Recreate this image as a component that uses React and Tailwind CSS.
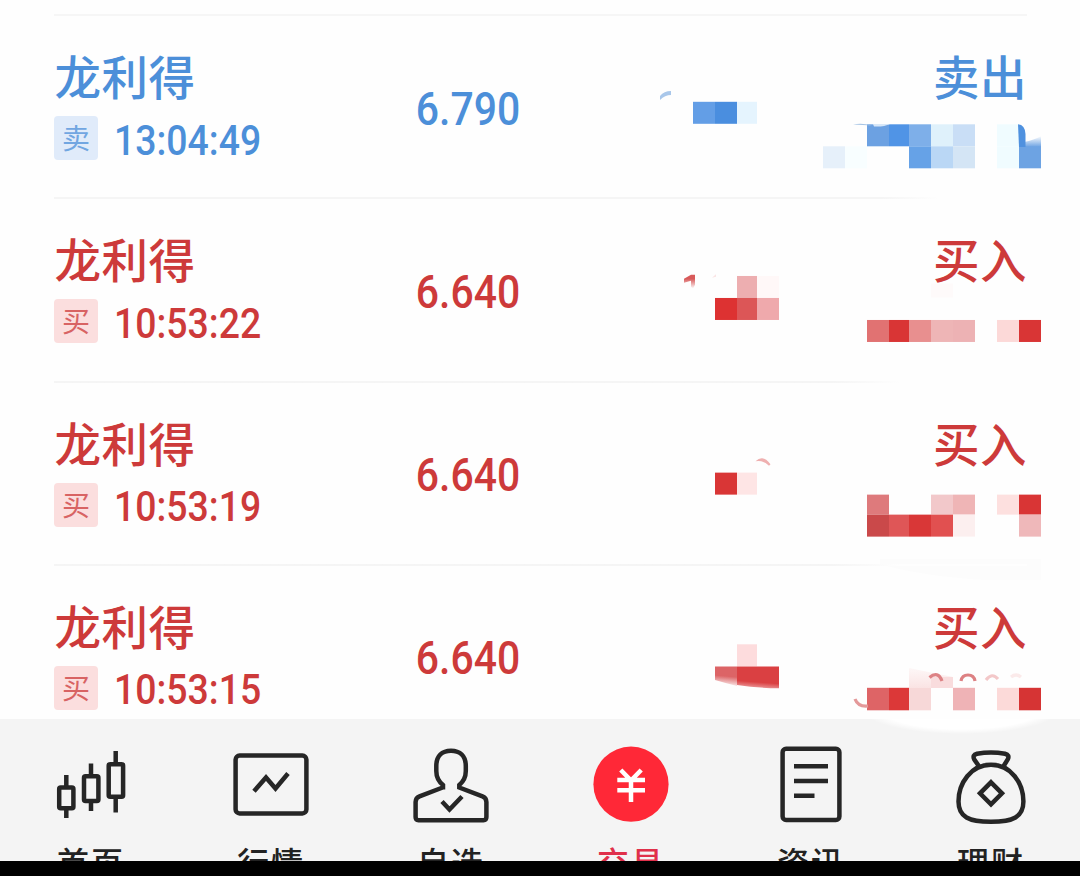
import React from "react";

// Each masked block: [x, y, width, height, colour]
const trades = [
  {
    name: "龙利得", tag: "卖", time: "13:04:49", price: "6.790", side: "卖出", sell: true, top: 14, fade: "full",
    blocks: [
      [693, 102, 22, 22, "#639ee6"], [715, 102, 22, 22, "#4a8edf"], [737, 102, 20, 22, "#e5f4fe"],
      [823, 146.5, 22, 22, "#e6f0fa"], [845, 146.5, 22, 22, "#f8feff"],
      [867, 124.5, 22, 22, "#6ca1e2"], [889, 124.5, 20, 22, "#5094e6"], [909, 124.5, 22, 22, "#7eafe9"],
      [931, 124.5, 22, 22, "#dff1fb"], [953, 124.5, 22, 22, "#c9def6"], [997, 124.5, 22, 22, "#f0fcff"],
      [909, 146.5, 22, 22, "#66a2e7"], [931, 146.5, 22, 22, "#bad7f5"], [953, 146.5, 22, 22, "#d4e5f5"],
      [997, 146.5, 22, 22, "#f0fcff"], [1019, 146.5, 22, 22, "#6da3e3"],
    ],
    extra: (
      <>
        <path d="M660 96 Q664 91 671 91 V95 Q665 95 660 100Z" fill="#a9c7ea" />
        <path d="M853 124.5 Q862 122.5 872 125.5Z" fill="#a6c4e5" />
        <path d="M873 124 H890 Q884 127 874 126.5Z" fill="#d7e7f8" />
        <path d="M1024 147 V142 Q1034 140 1041 136 V147Z" fill="url(#sellFade)" />
        <path d="M1018 124.3 Q1025 125 1025.5 134 V147 H1019Z" fill="#4f91df" />
      </>
    ),
  },
  {
    name: "龙利得", tag: "买", time: "10:53:22", price: "6.640", side: "买入", sell: false, top: 197.33, fade: "long",
    blocks: [
      [737, 276.5, 20, 22, "#edaeb0"], [757, 276.5, 22, 22, "#fff8f8"],
      [715, 298.5, 22, 22, "#dd3232"], [737, 298.5, 20, 22, "#dc5657"], [757, 298.5, 22, 22, "#efa9ac"],
      [931, 284, 22, 14, "#fefafa"],
      [867, 320.5, 22, 22, "#e17272"], [889, 320.5, 20, 22, "#d93535"], [909, 320.5, 22, 22, "#e88f8f"],
      [931, 320.5, 22, 22, "#eeb5b6"], [953, 320.5, 22, 22, "#edb2b4"],
      [997, 320.5, 22, 22, "#fcd9d8"], [1019, 320.5, 22, 22, "#d93535"],
    ],
    extra: (
      <>
        <path d="M684 279 L691 275 H695 V285 L693 289 L691 287 V281 L684 283Z" fill="url(#buyFade)" />
        <path d="M712 278 L716 274.5 V277Z" fill="#fae4e4" />
      </>
    ),
  },
  {
    name: "龙利得", tag: "买", time: "10:53:19", price: "6.640", side: "买入", sell: false, top: 380.67, fade: "short",
    blocks: [
      [715, 472.5, 22, 22, "#d93636"], [737, 472.5, 20, 22, "#fee5e5"],
      [867, 494.5, 22, 20, "#de7a7c"], [931, 494.5, 22, 20, "#f2c8ca"], [953, 494.5, 22, 20, "#efb5b6"],
      [997, 494.5, 22, 20, "#fde0df"], [1019, 494.5, 22, 20, "#d93535"],
      [867, 514.5, 22, 22, "#ca494a"], [889, 514.5, 20, 22, "#df5657"], [909, 514.5, 22, 22, "#d93737"],
      [931, 514.5, 22, 22, "#e15050"], [953, 514.5, 22, 22, "#fcefef"], [1019, 514.5, 22, 22, "#efb8ba"],
    ],
    extra: <path d="M755.5 461 Q763 453.5 770.5 464 L769 465.5 Q763 459.5 755.5 461Z" fill="#efb0b0" />,
  },
  {
    name: "龙利得", tag: "买", time: "10:53:15", price: "6.640", side: "买入", sell: false, top: 564, fade: "short",
    blocks: [
      [737, 644.5, 20, 22, "#fddcdd"],
      [867, 688, 22, 22.5, "#de6466"], [889, 688, 20, 22.5, "#dc3838"], [909, 688, 22, 22.5, "#f7d8d8"],
      [953, 688, 22, 22.5, "#efb3b6"], [997, 688, 22, 22.5, "#fcdad9"], [1019, 688, 22, 22.5, "#d63434"],
    ],
    extra: (
      <>
        <path d="M880 559 H1041 V580 H985 Q920 576 880 564Z" fill="#fcfcfc" />
        <path d="M715 666.5 H737 V686 Q725 683 715 680Z" fill="url(#smearLight)" />
        <path d="M737 666.5 H779 V688.3 Q757 688 737 685Z" fill="url(#smearDark)" />
        <path d="M909 668 L953 677 V688 H909Z" fill="url(#haze)" />
        <path d="M931 677 H953 V688 H931Z" fill="#f9dcdd" />
        <g fill="none" strokeWidth="3.2">
          <path d="M929.5 677.5 Q938 670.5 942 681" stroke="#dd8285" />
          <path d="M961 681 Q962 675 968 675 T975 681" stroke="#dd8183" />
          <path d="M986 680 Q992 672 998 679" stroke="#f3c8c9" />
          <path d="M1011 677 Q1016 673 1021 677" stroke="#fbeaea" />
          <path d="M855 699 Q858 707 868 706" stroke="#e4999a" />
        </g>
      </>
    ),
  },
];

const dividers = {
  full: "bg-[#f6f6f6]",
  long: "bg-linear-to-r from-[#f5f5f5] from-85% to-[#fefefe] to-91%",
  short: "bg-linear-to-r from-[#f5f5f5] from-80% to-[#fefefe] to-87%",
};

function Mask({ trade }) {
  return (
    <svg
      className="absolute top-0 right-0 h-[184px] w-[440px] overflow-visible"
      viewBox={`640 ${trade.top} 440 184`}
      aria-hidden="true"
    >
      <defs>
        <linearGradient id="sellFade" x1="0" y1="0" x2="0" y2="1">
          <stop offset="0" stopColor="#6da3e3" stopOpacity="0" />
          <stop offset="1" stopColor="#6da3e3" />
        </linearGradient>
        <linearGradient id="buyFade" x1="0" y1="0" x2="0" y2="1">
          <stop offset="0.3" stopColor="#d85a5a" />
          <stop offset="1" stopColor="#d85a5a" stopOpacity="0" />
        </linearGradient>
        <linearGradient id="smearLight" x1="0.1" y1="0" x2="0" y2="1">
          <stop offset="0.45" stopColor="#dc6466" />
          <stop offset="1" stopColor="#dc6466" stopOpacity="0" />
        </linearGradient>
        <linearGradient id="smearDark" x1="0.15" y1="0" x2="0" y2="1">
          <stop offset="0.65" stopColor="#da4042" />
          <stop offset="1" stopColor="#da4042" stopOpacity="0.4" />
        </linearGradient>
        <linearGradient id="haze" x1="0" y1="0" x2="0" y2="1">
          <stop offset="0" stopColor="#fbe6e6" stopOpacity="0.3" />
          <stop offset="1" stopColor="#fae3e3" />
        </linearGradient>
      </defs>
      <g transform="translate(0 -0.2)">
        {trade.blocks.map(([x, y, w, h, fill], i) => (
          <rect key={i} x={x} y={y} width={w} height={h} fill={fill} />
        ))}
      </g>
      {trade.extra}
    </svg>
  );
}

function TradeRow({ trade }) {
  const color = trade.sell ? "text-[#4c8fd9]" : "text-[#cd3a3a]";
  const tag = trade.sell ? "bg-[#e0ebfa]" : "bg-[#fbdede]";
  return (
    <div className={`relative h-[183.33px] shrink-0 pl-[54px] pr-[53px] ${color}`}>
      <Mask trade={trade} />
      <div className={`relative h-[2px] w-full ${dividers[trade.fade]}`} />
      <div className="relative grid grid-cols-[361px_1fr_auto]">
        <div className="pt-[31px]">
          <div className="h-[56px] pl-[0.5px] text-[46.5px] leading-[56px] font-[450] tracking-[0.5px]">{trade.name}</div>
          <div className="mt-[13px] flex h-[44px] items-center">
            <span className={`flex size-[44px] items-center justify-center rounded-[4px] text-[28px] leading-none ${tag}`}>
              <span className="-translate-y-[1.5px] opacity-75">{trade.tag}</span>
            </span>
            <span className="ml-[16px] inline-block origin-left scale-x-[0.89] pt-[5px] font-[Roboto] text-[42px] leading-[44px] font-medium whitespace-nowrap">
              {trade.time}
            </span>
          </div>
        </div>
        <div className="pt-[64.5px]">
          <span className="inline-block origin-left scale-x-[0.87] pl-[1px] font-[Roboto] text-[47px] leading-[56px] font-medium">
            {trade.price}
          </span>
        </div>
        <div className="h-[56px] pt-[31px] text-[46.5px] leading-[56px] font-[450] tracking-[0.5px]">{trade.side}</div>
      </div>
    </div>
  );
}

const tabs = [
  {
    label: "首页",
    box: "51 744 80 80",
    icon: (
      <>
        <rect x="59.2" y="787.4" width="14.2" height="20.8" rx="1.5" />
        <path d="M66.3 775V787M66.3 808V818" />
        <rect x="84" y="776.2" width="14.4" height="24.8" rx="1.5" />
        <path d="M91 763.5V776M91 801V811" />
        <rect x="108.7" y="764.2" width="14.4" height="32.6" rx="1.5" />
        <path d="M115.7 751V764M115.7 797V812.5" />
      </>
    ),
  },
  {
    label: "行情",
    box: "231 744 80 80",
    icon: (
      <>
        <rect x="235.6" y="755.6" width="70.8" height="57.8" rx="4" />
        <path d="M254 791.3L266 777.5L275.5 788.5L288 773.5" />
      </>
    ),
  },
  {
    label: "自选",
    box: "411 744 80 80",
    icon: (
      <>
        <path d="M443 789.5V785C438 781 436.3 776 436.3 771V766C436.3 756 442 750.7 451 750.7S465.8 756 465.8 766V771C465.8 776 464 781 459.3 785V787.5L482.5 796.3Q486.4 797.8 486.4 802V817Q486.4 820.2 483.5 820.2H418.5Q415.6 820.2 415.6 817V802Q415.6 797.8 419.5 796.3L444 787" />
        <path d="M442 801.5L449.5 809.5L462 796.5" />
      </>
    ),
  },
  {
    label: "交易",
    box: "591 744 80 80",
    active: true,
    icon: (
      <>
        <circle cx="631" cy="784.2" r="37.6" fill="#ff2837" stroke="none" />
        <path d="M620.8 770L631 780.5L641.2 770M617.3 780H645M617.3 790.3H645M631 780V802" stroke="#ffffff" />
      </>
    ),
  },
  {
    label: "资讯",
    box: "771 744 80 80",
    icon: (
      <>
        <rect x="782.6" y="748.8" width="56.8" height="71.2" rx="3.5" />
        <path d="M794 766.2H828M794 781H828M794 795.8H814.5" />
      </>
    ),
  },
  {
    label: "理财",
    box: "951 744 80 80",
    icon: (
      <>
        <path d="M979.5 767L974.3 759.5Q972 755 977 753.7Q991 751.5 1005 753.7Q1010 755 1007.7 759.5L1003 767" />
        <path d="M991 764.8C971 764.8 958.5 783 958.5 801.5C958.5 817 969 821.8 991 821.8S1023.4 817 1023.4 801.5C1023.4 783 1011 764.8 991 764.8Z" />
        <path d="M991 782.3L1002 793.3L991 804.3L980 793.3Z" />
      </>
    ),
  },
];

function TabBar() {
  return (
    <nav className="relative h-[142px] shrink-0 overflow-hidden bg-[#f4f4f4] pl-px">
      <svg className="absolute top-0 right-0 h-[20px] w-[220px]" viewBox="860 719 220 20" aria-hidden="true">
        <defs>
          <radialGradient id="glow">
            <stop offset="0.8" stopColor="#ffffff" />
            <stop offset="1" stopColor="#ffffff" stopOpacity="0" />
          </radialGradient>
        </defs>
        <ellipse cx="961" cy="710" rx="98" ry="24" fill="url(#glow)" />
      </svg>
      <div className="relative grid grid-cols-[repeat(6,180px)]">
        {tabs.map((tab) => (
          <div key={tab.label} className="flex flex-col items-center pt-[25px]">
            <svg
              className="size-[80px] overflow-visible"
              viewBox={tab.box}
              fill="none"
              stroke="#262626"
              strokeWidth="4.5"
              aria-hidden="true"
            >
              {tab.icon}
            </svg>
            <span
              className={`mt-[17px] text-[32px] leading-[40px] font-medium tracking-[2px] whitespace-nowrap ${
                tab.active ? "text-[#e0304a]" : "text-[#222222]"
              }`}
            >
              {tab.label}
            </span>
          </div>
        ))}
      </div>
    </nav>
  );
}

export default function App() {
  return (
    <div className="flex h-[876px] w-[1080px] flex-col overflow-hidden bg-[#fefefe] font-['Noto_Sans_CJK_SC',sans-serif]">
      <main className="flex h-[719px] shrink-0 flex-col overflow-hidden pt-[14px]">
        {trades.map((trade) => (
          <TradeRow key={trade.time} trade={trade} />
        ))}
      </main>
      <TabBar />
      <div className="h-[15px] shrink-0 bg-black" />
    </div>
  );
}
